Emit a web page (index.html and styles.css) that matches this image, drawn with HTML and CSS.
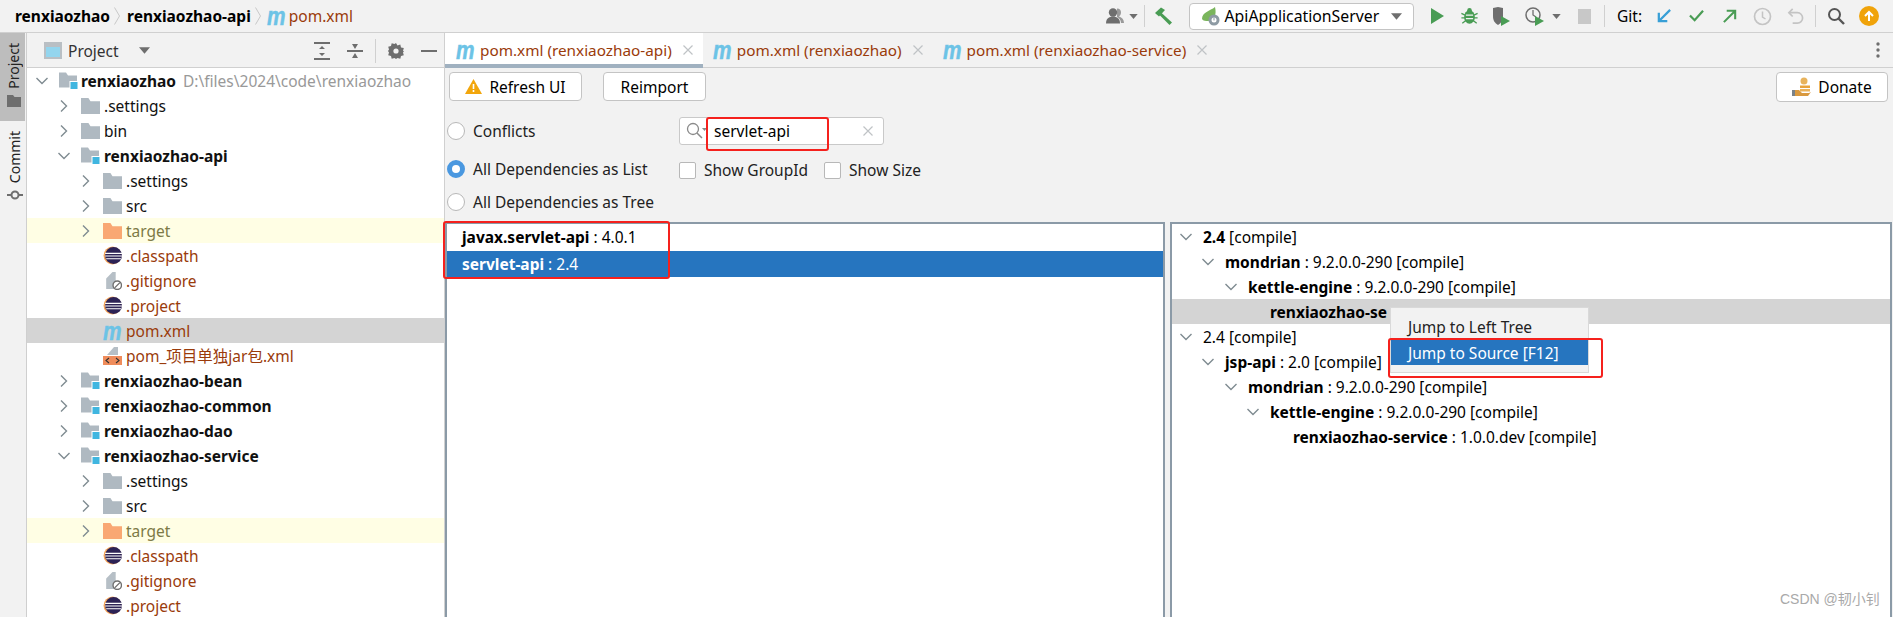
FILE: index.html
```html
<!DOCTYPE html>
<html lang="zh">
<head>
<meta charset="utf-8">
<title>pom.xml</title>
<link rel="stylesheet" href="styles.css">
</head>
<body>
<svg class="defs" width="0" height="0" aria-hidden="true">
  <symbol id="down" viewBox="0 0 14 14"><path d="M1.500 4l5.500 5.500L12.500 4" fill="none" stroke="#7f8b91" stroke-width="1.400"/></symbol>
  <symbol id="right" viewBox="0 0 14 14"><path d="M4 1.500L9.500 7 4 12.500" fill="none" stroke="#7f8b91" stroke-width="1.400"/></symbol>
  <symbol id="folder" viewBox="0 0 18 16"><path d="M0 1h7l2 3h9v12H0z" fill="#afb9c1"/></symbol>
  <symbol id="folder-o" viewBox="0 0 18 16"><path d="M0 1h7l2 3h9v12H0z" fill="#f9a873"/></symbol>
  <symbol id="module" viewBox="0 0 19 18"><path d="M0 1h7l2 3h9v10h-7v2H0z" fill="#afb9c1"/><rect x="11" y="10" width="8" height="8" fill="#40b6e0" stroke="#fff" stroke-width="1"/></symbol>
  <symbol id="eclipse" viewBox="0 0 18 18"><circle cx="9" cy="9" r="8.500" fill="#f6a65a"/><circle cx="10" cy="9" r="8" fill="#2c2255"/><path d="M2 7h16M2 9.500h16M3 12h14" stroke="#fff" stroke-width="1"/></symbol>
  <symbol id="ignore" viewBox="0 0 18 18"><path d="M3 7l6-6h3v16H3z" fill="#b6bfc6"/><circle cx="13.500" cy="13.500" r="4" fill="#fff" stroke="#6e6e6e" stroke-width="1.300"/><path d="M11 16l5-5" stroke="#6e6e6e" stroke-width="1.300"/></symbol>
  <symbol id="xmlfile" viewBox="0 0 19 19"><path d="M4 9l7-8h4v8z" fill="#b6bfc6"/><rect y="10" width="19" height="9" fill="#ef8c5b"/><path d="M6 12l-3 2.500L6 17M13 12l3 2.500L13 17" fill="none" stroke="#333" stroke-width="1.100"/></symbol>
  <symbol id="close" viewBox="0 0 10 10"><path d="M.5.500l9 9M9.500.500l-9 9" stroke="#bfc3c6" stroke-width="1.200"/></symbol>
  <symbol id="crumb" viewBox="0 0 6 18"><path d="M.5.500L5.500 9 .5 17.500" fill="none" stroke="#c8c8c8" stroke-width="1"/></symbol>
  <symbol id="caret" viewBox="0 0 10 6"><path d="M0 0h10L5 6z" fill="#6e6e6e"/></symbol>
</svg>

<header class="topbar">
  <nav class="crumbs">
    <b>renxiaozhao</b>
    <svg class="crumb-sep"><use href="#crumb"/></svg>
    <b>renxiaozhao-api</b>
    <svg class="crumb-sep crumb-sep-b"><use href="#crumb"/></svg>
    <span class="m">m</span>
    <span class="file-name">pom.xml</span>
  </nav>
  <div class="tools">
    <span class="tool tool-user"><svg width="18" height="16" viewBox="0 0 18 16"><path d="M11 .5c3 0 4 2 4 4 0 2-1 3-2 4 3 1 5 3 5 6.500h-3c0-3-2-5-4-6z" fill="#9a9a9a"/><circle cx="7" cy="4.500" r="4.200" fill="#6e6e6e"/><path d="M0 15.500c0-5 3-7 7-7s7 2 7 7z" fill="#6e6e6e"/></svg><svg class="tool-caret" width="9" height="5"><use href="#caret"/></svg></span>
    <i class="sep"></i>
    <span class="tool tool-hammer"><svg width="19" height="18" viewBox="0 0 19 18"><path d="M1 6l6-5.500 4 2.500-6 6.500z" fill="#499c54"/><path d="M6.500 5L18 15.500 15.500 18 4.500 7z" fill="#499c54"/></svg></span>
    <span class="combo">
      <svg width="20" height="20" viewBox="0 0 20 20"><path d="M1 13C1 6 9 5 14 1c2 8-1 14-7 14-2 0-5 0-6-2z" fill="#7ab55c"/><circle cx="13" cy="14" r="5.500" fill="#8d9aa3"/><circle cx="13" cy="14" r="2.500" fill="#fff"/><path d="M13 11.500v3" stroke="#8d9aa3" stroke-width="1"/></svg>
      <span class="combo-label">ApiApplicationServer</span>
      <svg width="11" height="7"><use href="#caret"/></svg>
    </span>
    <span class="tool tool-run"><svg width="13" height="16" viewBox="0 0 13 16"><path d="M0 0l13 8-13 8z" fill="#499c54"/></svg></span>
    <span class="tool tool-bug"><svg width="17" height="18" viewBox="0 0 18 20"><ellipse cx="9" cy="11" rx="6" ry="7.500" fill="#499c54"/><circle cx="9" cy="3.500" r="2.500" fill="#499c54"/><path d="M0 7l4 2M18 7l-4 2M0 12h4M18 12h-4M1 18l4-3M17 18l-4-3" stroke="#499c54" stroke-width="1.500"/><path d="M5 9h8M5 13h8" stroke="#f2f2f2" stroke-width="1.300"/></svg></span>
    <span class="tool"><svg width="20" height="20" viewBox="0 0 20 20"><path d="M2 2l5-1 5 1v8c0 5-2 7-5 9-3-2-5-4-5-9z" fill="#6e6e6e"/><path d="M10 10l9 5-9 5z" fill="#499c54"/></svg></span>
    <span class="tool tool-prof"><svg width="20" height="20" viewBox="0 0 20 20"><circle cx="8" cy="9" r="7" fill="none" stroke="#6e6e6e" stroke-width="1.500"/><path d="M8 4v5l3 2" fill="none" stroke="#6e6e6e" stroke-width="1.300"/><path d="M10 10l9 5-9 5z" fill="#499c54"/></svg><svg class="tool-caret" width="9" height="5"><use href="#caret"/></svg></span>
    <span class="tool tool-stop"><span class="stop-box"></span></span>
    <i class="sep"></i>
    <span class="git-label">Git:</span>
    <span class="tool"><svg width="16" height="16" viewBox="0 0 17 17"><path d="M15 2L4 13M3 5v9h9" fill="none" stroke="#389fd6" stroke-width="2.400"/></svg></span>
    <span class="tool"><svg width="17" height="14" viewBox="0 0 18 15"><path d="M2 7l5 5 9-10" fill="none" stroke="#499c54" stroke-width="2.400"/></svg></span>
    <span class="tool"><svg width="16" height="16" viewBox="0 0 17 17"><path d="M2 15L13 4M5 3h9v9" fill="none" stroke="#499c54" stroke-width="2.200"/></svg></span>
    <span class="tool"><svg width="19" height="19" viewBox="0 0 19 19"><circle cx="9.500" cy="9.500" r="8" fill="none" stroke="#c4c4c4" stroke-width="1.700"/><path d="M9.500 4.500v5.500l3 2" fill="none" stroke="#c4c4c4" stroke-width="1.500"/></svg></span>
    <span class="tool"><svg width="17" height="17" viewBox="0 0 18 18"><path d="M2 5h9a5 5 0 010 11H6" fill="none" stroke="#c4c4c4" stroke-width="1.800"/><path d="M6 1L2 5l4 4" fill="none" stroke="#c4c4c4" stroke-width="1.800"/></svg></span>
    <i class="sep sep-wide"></i>
    <span class="tool"><svg width="18" height="18" viewBox="0 0 18 18"><circle cx="7.500" cy="7.500" r="5.500" fill="none" stroke="#555" stroke-width="2"/><path d="M11.500 11.500L17 17" stroke="#555" stroke-width="2.400"/></svg></span>
    <span class="tool"><span class="update"><svg width="12" height="12" viewBox="0 0 12 12"><path d="M6 11V2M2 6l4-4 4 4" fill="none" stroke="#fff" stroke-width="2"/></svg></span></span>
    <i class="edge-dot"></i>
  </div>
</header>

<div class="main">
  <aside class="stripe">
    <div class="stripe-btn stripe-active">
      <span class="vtext">Project</span>
      <svg width="14" height="12" viewBox="0 0 14 12"><path d="M0 0h6l1.500 2H14v10H0z" fill="#6e6e6e"/></svg>
    </div>
    <div class="stripe-btn">
      <span class="vtext">Commit</span>
      <svg width="16" height="12" viewBox="0 0 16 12"><circle cx="8" cy="6" r="3.500" fill="none" stroke="#6e6e6e" stroke-width="2"/><path d="M0 6h4M12 6h4" stroke="#6e6e6e" stroke-width="2"/></svg>
    </div>
  </aside>

  <section class="project">
    <div class="project-head">
      <svg class="win-icon" width="18" height="17" viewBox="0 0 18 17"><rect width="18" height="17" fill="#b9bfc4"/><rect x="2" y="5" width="14" height="10" fill="#93d5ee"/></svg>
      <span class="project-title">Project</span>
      <svg class="project-caret" width="11" height="7"><use href="#caret"/></svg>
      <span class="head-tools">
        <svg width="16" height="18" viewBox="0 0 16 18"><path d="M0 1h16M0 17h16" stroke="#6e6e6e" stroke-width="2"/><path d="M8 4L5 7h6zM8 14l-3-3h6z" fill="#6e6e6e"/></svg>
        <svg class="ht-2" width="16" height="18" viewBox="0 0 16 18"><path d="M0 9h16" stroke="#6e6e6e" stroke-width="2"/><path d="M8 7L5 2h6zM8 11l-3 5h6z" fill="#6e6e6e"/></svg>
        <i class="head-sep"></i>
        <svg class="ht-3" width="16" height="16" viewBox="0 0 16 16"><path d="M8 0l1.500 2.400 2.800-.8.700 2.800 2.800.700-.8 2.800L16 8l-1 1.500.8 2.800-2.800.7-.7 2.800-2.800-.8L8 16l-1.500-1-2.800.8-.7-2.800-2.800-.7.8-2.800L0 8l1-1.500-.8-2.800 2.800-.7.700-2.800 2.800.8z" fill="#6e6e6e"/><circle cx="8" cy="8" r="2.600" fill="#f2f2f2"/></svg>
        <svg class="ht-4" width="16" height="2"><rect width="16" height="2" fill="#6e6e6e"/></svg>
      </span>
    </div>
    <div class="tree">
      <div class="row d0"><svg class="arrow"><use href="#down"/></svg><svg class="ico ico-root"><use href="#module"/></svg><b>renxiaozhao</b><span class="path">D:\files\2024\code\renxiaozhao</span></div>
      <div class="row d1"><svg class="arrow"><use href="#right"/></svg><svg class="ico"><use href="#folder"/></svg><span>.settings</span></div>
      <div class="row d1"><svg class="arrow"><use href="#right"/></svg><svg class="ico"><use href="#folder"/></svg><span>bin</span></div>
      <div class="row d1"><svg class="arrow"><use href="#down"/></svg><svg class="ico"><use href="#module"/></svg><b>renxiaozhao-api</b></div>
      <div class="row d2"><svg class="arrow"><use href="#right"/></svg><svg class="ico"><use href="#folder"/></svg><span>.settings</span></div>
      <div class="row d2"><svg class="arrow"><use href="#right"/></svg><svg class="ico"><use href="#folder"/></svg><span>src</span></div>
      <div class="row d2 excluded"><svg class="arrow"><use href="#right"/></svg><svg class="ico"><use href="#folder-o"/></svg><span>target</span></div>
      <div class="row d2 vcs"><i class="arrow"></i><svg class="ico"><use href="#eclipse"/></svg><span>.classpath</span></div>
      <div class="row d2 vcs"><i class="arrow"></i><svg class="ico"><use href="#ignore"/></svg><span>.gitignore</span></div>
      <div class="row d2 vcs"><i class="arrow"></i><svg class="ico"><use href="#eclipse"/></svg><span>.project</span></div>
      <div class="row d2 vcs current"><i class="arrow"></i><span class="m ico-m">m</span><span>pom.xml</span></div>
      <div class="row d2 vcs"><i class="arrow"></i><svg class="ico"><use href="#xmlfile"/></svg><span>pom_项目单独jar包.xml</span></div>
      <div class="row d1"><svg class="arrow"><use href="#right"/></svg><svg class="ico"><use href="#module"/></svg><b>renxiaozhao-bean</b></div>
      <div class="row d1"><svg class="arrow"><use href="#right"/></svg><svg class="ico"><use href="#module"/></svg><b>renxiaozhao-common</b></div>
      <div class="row d1"><svg class="arrow"><use href="#right"/></svg><svg class="ico"><use href="#module"/></svg><b>renxiaozhao-dao</b></div>
      <div class="row d1"><svg class="arrow"><use href="#down"/></svg><svg class="ico"><use href="#module"/></svg><b>renxiaozhao-service</b></div>
      <div class="row d2"><svg class="arrow"><use href="#right"/></svg><svg class="ico"><use href="#folder"/></svg><span>.settings</span></div>
      <div class="row d2"><svg class="arrow"><use href="#right"/></svg><svg class="ico"><use href="#folder"/></svg><span>src</span></div>
      <div class="row d2 excluded"><svg class="arrow"><use href="#right"/></svg><svg class="ico"><use href="#folder-o"/></svg><span>target</span></div>
      <div class="row d2 vcs"><i class="arrow"></i><svg class="ico"><use href="#eclipse"/></svg><span>.classpath</span></div>
      <div class="row d2 vcs"><i class="arrow"></i><svg class="ico"><use href="#ignore"/></svg><span>.gitignore</span></div>
      <div class="row d2 vcs"><i class="arrow"></i><svg class="ico"><use href="#eclipse"/></svg><span>.project</span></div>
    </div>
  </section>

  <section class="editor">
    <div class="tabs">
      <div class="tab tab-active"><span class="m">m</span><span class="file-name">pom.xml (renxiaozhao-api)</span><svg class="tab-x"><use href="#close"/></svg></div>
      <div class="tab"><span class="m">m</span><span class="file-name">pom.xml (renxiaozhao)</span><svg class="tab-x"><use href="#close"/></svg></div>
      <div class="tab"><span class="m">m</span><span class="file-name">pom.xml (renxiaozhao-service)</span><svg class="tab-x"><use href="#close"/></svg></div>
      <svg class="kebab" width="4" height="16" viewBox="0 0 4 16"><circle cx="2" cy="2" r="1.700" fill="#6e6e6e"/><circle cx="2" cy="8" r="1.700" fill="#6e6e6e"/><circle cx="2" cy="14" r="1.700" fill="#6e6e6e"/></svg>
    </div>
    <div class="actions">
      <button class="btn btn-refresh"><svg width="17" height="15" viewBox="0 0 17 15"><path d="M8.500 0L17 15H0z" fill="#f2a60c"/><path d="M8.500 5v5M8.500 11v2" stroke="#fff" stroke-width="1.600"/></svg>Refresh UI</button>
      <button class="btn btn-reimport">Reimport</button>
      <button class="btn btn-donate"><svg width="20" height="20" viewBox="0 0 20 20"><circle cx="12" cy="4" r="3.500" fill="#e8b35c"/><rect x="8" y="8.500" width="10" height="2.500" fill="#e8a33c"/><rect x="8" y="12" width="10" height="2.500" fill="#eab25a"/><path d="M0 13h3v6H0z" fill="#7a8288"/><path d="M3 13h4l3 3h7l2-1-3 4H3z" fill="#d9993f"/></svg>Donate</button>
    </div>
    <div class="filters">
      <div class="radios">
        <label class="radio-row"><i class="radio"></i>Conflicts</label>
        <label class="radio-row radio-row-mid"><i class="radio radio-on"></i>All Dependencies as List</label>
        <label class="radio-row radio-row-last"><i class="radio"></i>All Dependencies as Tree</label>
      </div>
      <div class="search-col">
        <div class="search">
          <svg width="22" height="18" viewBox="0 0 22 18"><circle cx="7" cy="7" r="5.500" fill="none" stroke="#8a8a8a" stroke-width="1.300"/><path d="M11 11l5 5" stroke="#8a8a8a" stroke-width="1.500"/><path d="M16 6h5l-2.500 3z" fill="#8a8a8a"/></svg>
          <span class="search-text">servlet-api</span>
          <svg class="search-x" width="10" height="10"><use href="#close"/></svg>
        </div>
        <div class="checks">
          <label class="check"><i class="box"></i>Show GroupId</label>
          <label class="check"><i class="box"></i>Show Size</label>
        </div>
      </div>
    </div>
    <div class="panes">
      <div class="pane pane-list">
        <div class="dep dep-first"><b>javax.servlet-api</b> : 4.0.1</div>
        <div class="dep dep-sel"><b>servlet-api</b> : 2.4</div>
      </div>
      <div class="pane pane-tree">
        <div class="trow t0"><svg class="arrow"><use href="#down"/></svg><span><b>2.4</b> [compile]</span></div>
        <div class="trow t1"><svg class="arrow"><use href="#down"/></svg><span><b>mondrian</b> : 9.2.0.0-290 [compile]</span></div>
        <div class="trow t2"><svg class="arrow"><use href="#down"/></svg><span><b>kettle-engine</b> : 9.2.0.0-290 [compile]</span></div>
        <div class="trow t3 trow-sel"><i class="arrow"></i><b>renxiaozhao-se</b></div>
        <div class="trow t0"><svg class="arrow"><use href="#down"/></svg><span>2.4 [compile]</span></div>
        <div class="trow t1"><svg class="arrow"><use href="#down"/></svg><span><b>jsp-api</b> : 2.0 [compile]</span></div>
        <div class="trow t2"><svg class="arrow"><use href="#down"/></svg><span><b>mondrian</b> : 9.2.0.0-290 [compile]</span></div>
        <div class="trow t3"><svg class="arrow"><use href="#down"/></svg><span><b>kettle-engine</b> : 9.2.0.0-290 [compile]</span></div>
        <div class="trow t4"><i class="arrow"></i><span><b>renxiaozhao-service</b> : 1.0.0.dev [compile]</span></div>
      </div>
    </div>
  </section>
</div>

<div class="menu">
  <div class="menu-item">Jump to Left Tree</div>
  <div class="menu-item menu-item-on">Jump to Source [F12]</div>
</div>
<i class="mark mark-search"></i>
<i class="mark mark-list"></i>
<i class="mark mark-menu"></i>
<span class="watermark">CSDN @韧小钊</span>
</body>
</html>
```
FILE: styles.css
```css
* { box-sizing: border-box; }
html, body { margin: 0; height: 617px; overflow: hidden; }
body {
  position: relative;
  background: #f2f2f2;
  color: #000;
  font: 15.5px/20px "Noto Sans", "Noto Sans CJK SC", sans-serif;
}
.defs { position: absolute; }
b { font-weight: 700; }
i { font-style: normal; display: block; flex: none; }
svg { display: block; flex: none; }

.m {
  display: block;
  flex: none;
  width: 22px;
  font: italic 700 26px/20px "Liberation Sans", sans-serif;
  color: #6cc3e6;
  -webkit-text-stroke: .5px #6cc3e6;
  transform: scaleX(.8);
  transform-origin: left center;
}
.file-name { color: #9a3b0b; }

/* top bar */
.topbar {
  height: 33px;
  display: flex;
  align-items: center;
  border-bottom: 1px solid #d0d0d0;
  padding-left: 15px;
  overflow: hidden;
}
.crumbs { display: flex; align-items: center; }
.crumb-sep { width: 6px; height: 18px; margin: 0 7px 0 4px; }
.crumb-sep-b { margin-right: 6px; }
.crumbs .m { margin-right: 0; }
.tools { margin-left: auto; display: flex; align-items: center; height: 32px; }
.tool { width: 33px; height: 26px; display: flex; align-items: center; justify-content: center; flex: none; }
.tool-user { width: 44px; gap: 5px; }
.tool-caret { width: 9px; height: 5px; }
.tool-hammer { width: 44px; padding-right: 6px; }
.tool-run { margin-left: 7px; }
.tool-bug { width: 31px; }
.tool-prof { width: 45px; margin-left: 1.500px; padding-left: 6px; justify-content: flex-start; gap: 7px; }
.tool-stop { width: 40px; }
.stop-box { width: 13px; height: 15px; background: #c8c8c8; }
.sep { width: 1px; height: 22px; background: #d0d0d0; }
.sep-wide { margin: 0 3px; }
.combo {
  width: 225px; height: 27px;
  display: flex; align-items: center; gap: 4px;
  padding: 0 11px 0 11px;
  background: #fff; border: 1px solid #c4c4c4; border-radius: 4px;
}
.combo-label { flex: 1; white-space: nowrap; font-size: 15.8px; }
.git-label { width: 42px; padding-left: 12px; flex: none; }
.update { width: 20px; height: 20px; border-radius: 50%; background: #f0a30a; display: flex; align-items: center; justify-content: center; }
.edge-dot { width: 8px; height: 8px; }

.main { display: flex; height: 584px; }

/* side stripe */
.stripe { width: 27px; flex: none; border-right: 1px solid #cfcfcf; background: #f2f2f2; }
.stripe-btn { display: flex; flex-direction: column; align-items: center; gap: 6px; padding: 10px 0 12px; color: #222; }
.stripe-btn svg { margin-left: 3px; }
.stripe-active { background: #bdbdbd; height: 88px; margin-right: 1px; }
.vtext { writing-mode: vertical-rl; transform: rotate(180deg); font-size: 14px; line-height: 16px; margin-left: 3px; }

/* project */
.project { width: 418px; flex: none; background: #fff; border-right: 1px solid #d0d0d0; }
.project-head { height: 35px; display: flex; align-items: center; background: #f2f2f2; border-bottom: 1px solid #d0d0d0; padding: 1px 0 0 17px; }
.project-title { margin-left: 6px; color: #333; width: 71px; }
.head-tools { margin-left: auto; display: flex; align-items: center; padding-right: 7px; }
.ht-2 { margin-left: 17px; }
.head-sep { width: 1px; height: 24px; background: #d0d0d0; margin: 0 12px; }
.ht-4 { margin-left: 17px; }
.tree { overflow: hidden; }
.row { height: 25px; display: flex; align-items: center; white-space: nowrap; color: #111; }
.row.d0 { padding-left: 8px; }
.row.d1 { padding-left: 30px; }
.row.d2 { padding-left: 52px; }
.row .arrow { width: 14px; height: 14px; margin-right: 10px; }
.ico { width: 19px; height: 19px; margin-right: 4px; }
.ico-root { margin-right: 3px; }
.ico-m { width: 23px; }
.path { color: #999; margin-left: 7px; }
.excluded { background: #fffee4; color: #7d7a46; }
.vcs { color: #9a3b0b; }
.current { background: #d4d4d4; }

/* editor */
.editor { flex: 1; min-width: 0; display: flex; flex-direction: column; }
.tabs { height: 35px; display: flex; align-items: center; border-bottom: 1px solid #d0d0d0; font-size: 15.3px; }
.tab { height: 34px; padding: 0 10px; display: flex; align-items: center; gap: 2px; white-space: nowrap; }
.tab-active { background: #fff; border-bottom: 4px solid #a0b1c0; height: 35px; padding: 4px 10px 0 11px; }
.tab-x { width: 10px; height: 10px; margin-left: 9px; }
.kebab { margin-left: auto; margin-right: 13px; }

.actions { display: flex; padding: 4px 5px 0 4px; height: 34px; }
.btn {
  height: 29px; padding: 0; font: inherit; color: #000;
  background: #fff; border: 1px solid #c4c4c4; border-radius: 4px;
  display: flex; align-items: center; justify-content: center; gap: 7px;
}
.btn-refresh { width: 133px; }
.btn-reimport { width: 103px; margin-left: 21px; }
.btn-donate { width: 112px; height: 30px; margin-left: auto; gap: 6px; }

.filters { display: flex; height: 120px; flex: none; }
.radios { width: 234px; padding: 12px 0 0 2px; display: flex; flex-direction: column; }
.radio-row { height: 34px; display: flex; align-items: center; gap: 8px; color: #222; }
.radio-row-mid { margin-top: 4px; }
.radio-row-last { margin-top: -1px; }
.radio { width: 18px; height: 18px; border-radius: 50%; background: #fff; border: 1px solid #b8b8b8; }
.radio-on { border: 5px solid #4a98e0; }
.search-col { display: flex; flex-direction: column; padding-top: 15px; }
.search {
  width: 205px; height: 28px; display: flex; align-items: center;
  padding-left: 6px; background: #fff; border: 1px solid #c9c9c9; border-radius: 3px;
}
.search-text { margin-left: 6px; flex: 1; }
.search-x { margin-right: 10px; }
.checks { display: flex; margin-top: 15px; }
.check { display: flex; align-items: center; gap: 8px; margin-right: 16px; color: #222; }
.box { width: 17px; height: 17px; background: #fff; border: 1px solid #b8b8b8; border-radius: 2px; }

.panes { flex: 1; display: flex; gap: 5px; padding-right: 1px; min-height: 0; }
.pane { background: #fff; border: 2px solid #8b9aa7; border-width: 2px 2px 0; }
.pane-list { width: 720px; flex: none; }
.pane-tree { flex: 1; min-width: 0; }
.dep { padding-left: 15px; display: flex; align-items: center; white-space: pre; }
.dep-first { height: 27px; padding-bottom: 2px; }
.dep-sel { height: 26px; background: #2675bf; color: #fff; }
.trow { height: 25px; display: flex; align-items: center; white-space: nowrap; }
.trow .arrow { width: 14px; height: 14px; margin: 0 10px 0 -4px; flex: none; }
.t0 { padding-left: 11px; }
.t1 { padding-left: 33px; }
.t2 { padding-left: 56px; }
.t3 { padding-left: 78px; }
.t4 { padding-left: 101px; }
.trow-sel { background: #d4d4d4; }

/* overlays */
.menu {
  position: absolute; left: 1390px; top: 307px; width: 199px; height: 66px;
  padding-top: 6px; background: #f2f2f2; border: 1px solid #d9d9d9;
}
.menu-item { height: 25px; padding-left: 17px; display: flex; align-items: center; color: #222; }
.menu-item-on { margin-top: 1px; background: #2675bf; color: #fff; }
.mark { position: absolute; border: 2px solid #f5211d; border-radius: 3px; }
.mark-search { left: 706px; top: 117px; width: 123px; height: 34px; }
.mark-list { left: 443px; top: 221px; width: 227px; height: 58px; }
.mark-menu { left: 1388px; top: 338px; width: 215px; height: 40px; }
.watermark {
  position: absolute; left: 1780px; top: 589px;
  font: 14px/20px "Liberation Sans", "Noto Sans CJK SC", sans-serif;
  color: #a9a9a9;
}
```
